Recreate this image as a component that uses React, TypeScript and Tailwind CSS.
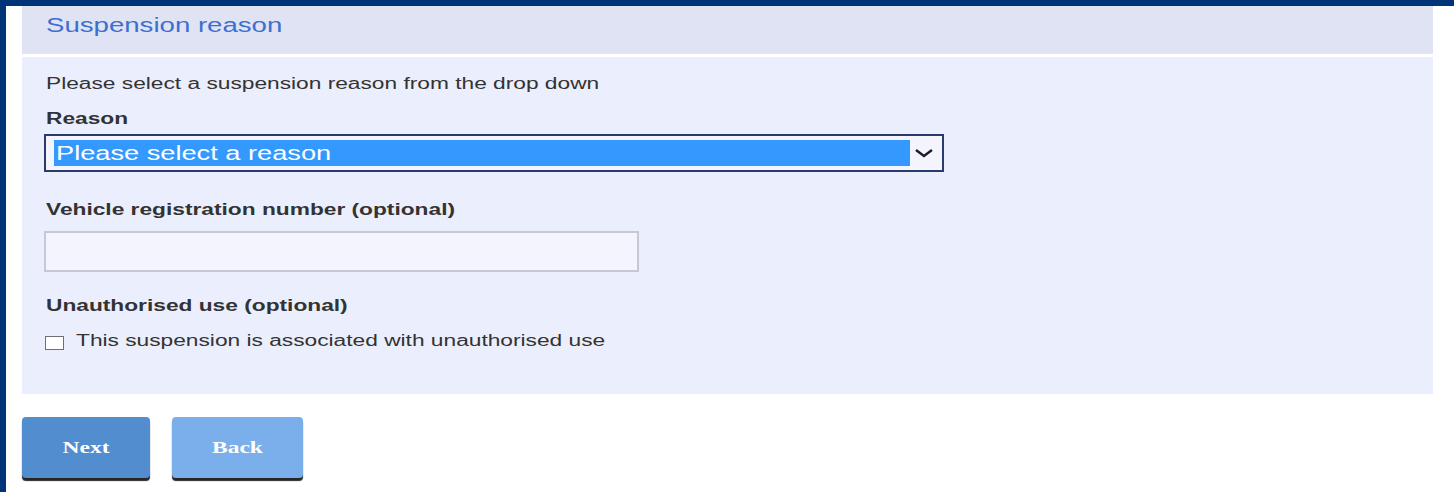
import React from 'react';

// Screen copy is rendered a little wide, so labels get a horizontal stretch
const Wide: React.FC<{ children: React.ReactNode; className?: string }> = ({ children, className = '' }) => (
  <span className={`block origin-left scale-x-[1.42] whitespace-nowrap ${className}`}>{children}</span>
);

const App: React.FC = () => {
  return (
    <div className="w-[1454px] h-[492px] overflow-hidden bg-white border-t-[6px] border-l-[6px] border-[#003478] pl-[16px] pr-[21px] font-['Liberation_Sans',Arial,sans-serif] text-[#333]">
      {/* Section header */}
      <div className="h-[48px] bg-[#dfe3f4] pl-[24px] pt-[7px]">
        <Wide className="text-[20px] leading-[24px] text-[#3d6fd1] !scale-x-[1.38]">Suspension reason</Wide>
      </div>

      {/* Form body */}
      <div className="mt-[3px] h-[337px] bg-[#ebeefc] pl-[24px] pt-[17px]">
        <Wide className="text-[16px] leading-[20px]">Please select a suspension reason from the drop down</Wide>

        <Wide className="mt-[15px] text-[16px] leading-[20px] font-bold">Reason</Wide>
        <div className="mt-[5px] -ml-[2px] w-[900px] h-[38px] border-2 border-[#2b3a6e] bg-[#f3f4fc] flex items-center pl-[8px] pr-[8px]">
          <div className="w-[858px] h-[26px] bg-[#3399ff] pl-[2px] flex items-center">
            <Wide className="text-[20px] leading-[24px] text-white !scale-x-[1.36]">Please select a reason</Wide>
          </div>
          <svg width="20" height="10" viewBox="0 0 20 10" className="ml-[4px]">
            <path d="M2 2 L10 8 L18 2" fill="none" stroke="#1a1a2e" strokeWidth="2.4" />
          </svg>
        </div>

        <Wide className="mt-[28px] text-[16px] leading-[20px] font-bold">Vehicle registration number (optional)</Wide>
        <div className="mt-[11px] -ml-[2px] w-[595px] h-[41px] border-2 border-[#c5c8d6] bg-[#f4f4fe]" />

        <Wide className="mt-[24px] text-[16px] leading-[20px] font-bold">Unauthorised use (optional)</Wide>
        <div className="mt-[15px] flex items-center h-[20px]">
          <div className="mt-[4px] -ml-[1px] w-[19px] h-[14px] border-[1.5px] border-[#707070] bg-white" />
          <Wide className="ml-[12px] text-[16px] leading-[20px]">This suspension is associated with unauthorised use</Wide>
        </div>
      </div>

      {/* Actions */}
      <div className="mt-[23px] flex gap-[22px] font-['Liberation_Serif','Times_New_Roman',serif]">
        <button className="w-[128px] h-[61px] rounded-[4px] bg-[#528dd0] text-white font-bold text-[17px] shadow-[0_3px_1px_#262626]">
          <span className="inline-block scale-x-[1.38]">Next</span>
        </button>
        <button className="w-[131px] h-[61px] rounded-[4px] bg-[#7bafeb] text-white font-bold text-[17px] shadow-[0_3px_1px_#262626]">
          <span className="inline-block scale-x-[1.38]">Back</span>
        </button>
      </div>
    </div>
  );
};

export default App;
